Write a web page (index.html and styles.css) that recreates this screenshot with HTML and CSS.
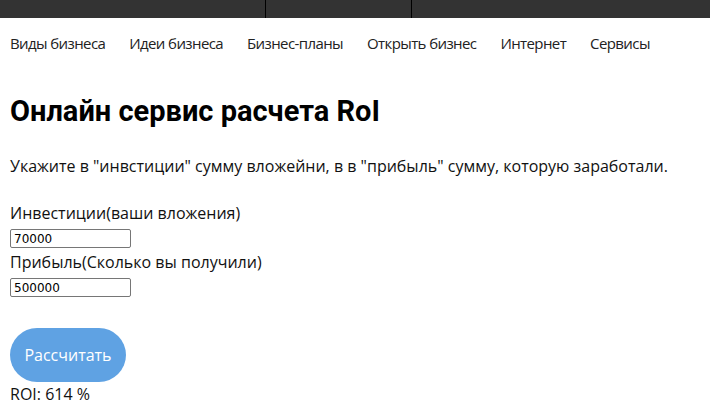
FILE: index.html
```html
<!DOCTYPE html>
<html lang="ru">
<head>
<meta charset="utf-8">
<link rel="stylesheet" href="styles.css">
</head>
<body>
<div class="topbar">
  <div class="seg seg1"></div>
  <div class="seg seg2"></div>
  <div class="seg seg3"></div>
</div>
<nav class="menu">
  <a href="#">Виды бизнеса</a>
  <a href="#">Идеи бизнеса</a>
  <a href="#">Бизнес-планы</a>
  <a href="#">Открыть бизнес</a>
  <a href="#">Интернет</a>
  <a href="#">Сервисы</a>
</nav>
<main class="content">
  <h1 class="title">Онлайн сервис расчета RoI</h1>
  <p class="lead">Укажите в "инвстиции" сумму вложейни, в в "прибыль" сумму, которую заработали.</p>
  <form class="calc">
    <label class="lbl">Инвестиции(ваши вложения)</label>
    <input class="field" type="text" value="70000">
    <label class="lbl">Прибыль(Сколько вы получили)</label>
    <input class="field" type="text" value="500000">
    <button class="btn" type="button">Рассчитать</button>
    <div class="result">ROI: 614 %</div>
  </form>
</main>
</body>
</html>
```
FILE: styles.css
```css
html, body { margin: 0; padding: 0; background: #fff; }
body { font-family: "Open Sans", "Liberation Sans", sans-serif; color: #111; }
.topbar { display: flex; height: 18px; background: #333; }
.seg { height: 100%; }
.seg1 { width: 265px; border-right: 1px solid #000; }
.seg2 { width: 145px; border-right: 1px solid #000; }
.seg3 { flex: 1; }
.menu { display: flex; gap: 24px; padding: 15px 10px 0; height: 28px; }
.menu a { color: #222; text-decoration: none; font-size: 15px; letter-spacing: -0.6px; font-weight: 400; line-height: 21px; }
.content { padding: 0 10px; }
.title { font-family: Roboto, "Liberation Sans", sans-serif; font-weight: 700; font-size: 29px; margin: 33px 0 0; line-height: 34px; color: #000; }
.lead { font-size: 16px; margin: 27px 0 0; line-height: 22px; }
.calc { display: flex; flex-direction: column; align-items: flex-start; margin-top: 24px; }
.lbl { font-size: 16px; line-height: 24px; }
.field { width: 121px; height: 19px; box-sizing: border-box; border: 1px solid #767676; border-radius: 2px; font-family: "DejaVu Sans", sans-serif; font-size: 12px; padding: 0 3px; margin: 4px 0 2px; }
.btn { margin-top: 29px; width: 116px; height: 54px; border: none; border-radius: 27px; background: #5fa2e3; color: #fff; font-family: "Open Sans", sans-serif; font-size: 16px; }
.result { font-size: 16px; line-height: 22px; margin-top: 1px; }
```
